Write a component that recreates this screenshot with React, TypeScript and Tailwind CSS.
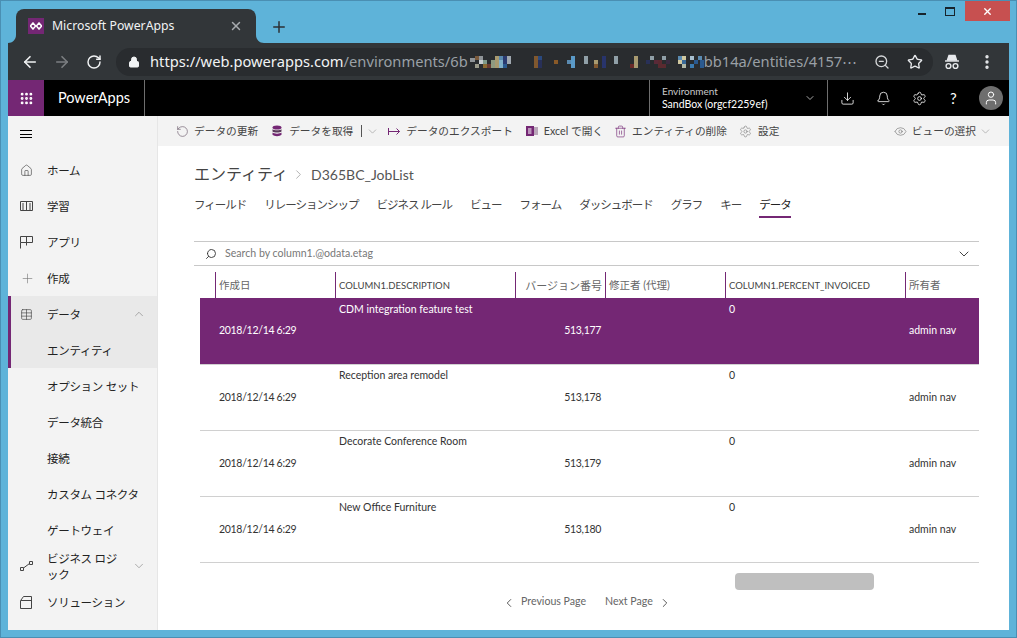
import React from "react";
import {
  ArrowLeft,
  ArrowRight,
  RotateCw,
  Lock,
  ZoomOut,
  Star,
  Plus,
  X,
  Grip,
  ChevronDown,
  ChevronUp,
  ChevronLeft,
  ChevronRight,
  Download,
  Bell,
  Settings,
  User,
  House,
  Table,
  Search,
  Eye,
  Trash2,
  EllipsisVertical,
} from "lucide-react";

const uiFont = "[font-family:'Lato','Noto_Sans_CJK_JP',sans-serif]";

// blurred part of the address bar
const mosaic: [number, number, number, number, string][] = [
  [0, 2, 5, 4, "#8f9498"], [5, 0, 4, 4, "#7a5a3c"], [9, 0, 4, 4, "#8f9498"], [5, 4, 4, 4, "#2a2d30"],
  [9, 4, 4, 4, "#c8cdd0"], [5, 8, 4, 4, "#9a9a8a"], [13, 4, 4, 4, "#7f9a8a"], [13, 8, 4, 4, "#8a6a30"],
  [17, 8, 4, 4, "#6a3a30"], [21, 4, 4, 8, "#8f9a80"], [25, 0, 4, 12, "#a89a70"], [29, 0, 4, 4, "#5a8ab0"],
  [29, 4, 4, 8, "#80b0c8"], [33, 0, 4, 8, "#2a3a70"], [33, 8, 4, 4, "#2a5a90"], [37, 0, 4, 8, "#a0a8b0"],
  [64, 0, 4, 12, "#80582f"], [68, 0, 4, 4, "#2a4a80"], [68, 4, 4, 8, "#283058"], [84, 4, 4, 4, "#8a5a28"],
  [97, 4, 4, 4, "#5a8ab0"], [101, 0, 4, 12, "#5a9ac8"], [114, 0, 4, 8, "#90a0a8"], [124, 4, 4, 4, "#a89a70"],
  [124, 8, 4, 4, "#80582f"], [132, 0, 4, 12, "#28346c"], [144, 0, 4, 8, "#90a0a8"], [160, 8, 4, 4, "#6a2a28"],
  [164, 0, 4, 12, "#a89a70"], [176, 4, 4, 4, "#283058"], [180, 0, 4, 4, "#90a0a8"], [184, 4, 4, 4, "#5a2a38"],
  [188, 4, 4, 8, "#5a2a30"], [192, 0, 4, 4, "#90a0a8"], [192, 8, 4, 4, "#5a2a30"], [196, 4, 4, 4, "#3a2a40"],
  [208, 0, 4, 4, "#5a8ab0"], [212, 0, 4, 4, "#d0c8a0"], [208, 4, 4, 4, "#d0c8a0"], [212, 4, 4, 4, "#3a6a98"],
  [212, 8, 4, 4, "#b0b8a8"], [220, 0, 4, 4, "#a8c0d0"], [224, 4, 4, 4, "#2a5a90"], [220, 8, 4, 4, "#3a7ab0"],
  [228, 0, 4, 4, "#5a8ab0"], [230, 4, 4, 8, "#2a5a90"],
];

function TabFlare({ flip }: { flip?: boolean }) {
  return (
    <svg width="8" height="8" viewBox="0 0 8 8" className={flip ? "-scale-x-100 self-end" : "self-end"}>
      <path d="M8 0V8H0C4.5 8 8 4.5 8 0Z" fill="#323639" />
    </svg>
  );
}

function TitleBar() {
  return (
    <div className="relative flex h-[42px] shrink-0 items-end pl-[7px]">
      <TabFlare />
      <div className="flex h-[34px] w-[240px] items-center rounded-t-[8px] bg-[#323639] pl-[12px] pr-[13px]">
        <span className="flex h-4 w-4 items-center justify-center bg-[#742774]">
          <svg width="12" height="8" viewBox="0 0 12 8">
            <path d="M3 1 5.6 4 3 7 .4 4ZM9 1 11.6 4 9 7 6.4 4Z" fill="none" stroke="#fff" strokeWidth="1.5" />
          </svg>
        </span>
        <span className="ml-2 text-[12.25px] text-[#f1f3f4] font-['Noto_Sans',sans-serif]">Microsoft PowerApps</span>
        <X className="ml-auto h-[14px] w-[14px] text-[#a8abae]" strokeWidth={2.5} />
      </div>
      <TabFlare flip />
      <Plus className="mb-[7px] ml-[6px] h-[18px] w-[18px] text-[#2c3135]" strokeWidth={2} />
      {/* window buttons */}
      <div className="absolute right-[6px] top-0 flex h-5 items-center">
        <span className="mr-[19px] mt-[6px] h-[2px] w-[8px] bg-[#17242c]" />
        <span className="mr-[10px] h-[9px] w-[10px] border border-t-2 border-[#17242c]" />
        <span className="flex h-5 w-[45px] items-center justify-center bg-[#c75050]">
          <X className="h-[11px] w-[11px] text-white" strokeWidth={3} />
        </span>
      </div>
    </div>
  );
}

function Toolbar() {
  return (
    <div className="flex h-[37px] shrink-0 items-center bg-[#323639] pl-[13px] pr-[12px]">
      <ArrowLeft className="h-[18px] w-[18px] text-[#f1f3f4]" strokeWidth={2.2} />
      <ArrowRight className="ml-[14px] h-[18px] w-[18px] text-[#7c7f82]" strokeWidth={2.2} />
      <RotateCw className="ml-[15px] h-[16px] w-[16px] text-[#f1f3f4]" strokeWidth={2.2} />
      <div className="ml-[14px] flex h-[28px] w-[817px] items-center rounded-full bg-[#292c2f] pl-[12px] pr-[10px]">
        <Lock className="h-[12px] w-[12px] text-[#f1f3f4]" fill="#f1f3f4" strokeWidth={2} />
        <span className="ml-[10px] whitespace-nowrap text-[14.7px] text-[#f1f3f4] font-['Noto_Sans',sans-serif]">
          https://web.powerapps.com<span className="text-[#9aa0a6]">/environments/6b</span>
        </span>
        <svg width="234" height="12" viewBox="0 0 234 12" className="ml-[2px] shrink-0">
          {mosaic.map(([x, y, w, h, c], i) => (
            <rect key={i} x={x} y={y} width={w} height={h} fill={c} />
          ))}
        </svg>
        <span className="whitespace-nowrap text-[14.7px] text-[#9aa0a6] font-['Noto_Sans',sans-serif]">
          bb14a/entities/4157⋯
        </span>
        <ZoomOut className="ml-auto h-[16px] w-[16px] text-[#d5d7d9]" strokeWidth={2} />
        <Star className="ml-[17px] h-[16px] w-[16px] text-[#e8eaed]" strokeWidth={2} />
      </div>
      <svg width="18" height="18" viewBox="0 0 18 18" className="ml-[10px]" fill="none" stroke="#e8eaed" strokeWidth="1.4">
        <path d="M2 8h14" />
        <path d="M4.5 7 6 2.5h6L13.5 7Z" fill="#e8eaed" />
        <circle cx="5.5" cy="13" r="2.4" />
        <circle cx="12.5" cy="13" r="2.4" />
      </svg>
      <EllipsisVertical className="ml-[17px] h-[18px] w-[18px] text-[#e8eaed]" strokeWidth={2.5} />
    </div>
  );
}

function AppHeader() {
  return (
    <div className={`flex h-[36px] shrink-0 items-stretch bg-black text-white ${uiFont}`}>
      <div className="flex w-[36px] items-center justify-center bg-[#742774]">
        <Grip className="h-[15px] w-[15px]" strokeWidth={2.6} />
      </div>
      <div className="flex w-[101px] items-center justify-center border-r border-[#6e6e6e] text-[14.5px]">PowerApps</div>
      <div className="ml-auto flex w-[179px] items-center border-x border-[#6e6e6e] pl-[12px] pr-[11px]">
        <div className="leading-[13px]">
          <div className="text-[10px] text-[#c8c8c8]">Environment</div>
          <div className="whitespace-nowrap text-[10.5px]">SandBox (orgcf2259ef)</div>
        </div>
        <ChevronDown className="ml-auto h-[12px] w-[12px] text-[#a8a8a8]" />
      </div>
      <div className="flex w-[181px] items-center pl-[12px]">
        <Download className="h-[15px] w-[15px]" strokeWidth={1.3} />
        <Bell className="ml-[21px] h-[15px] w-[15px]" strokeWidth={1.3} />
        <Settings className="ml-[21px] h-[15px] w-[15px]" strokeWidth={1.3} />
        <span className="ml-[23px] text-[15px] leading-none">?</span>
        <span className="ml-[22px] flex h-[24px] w-[24px] items-center justify-center rounded-full bg-[#6e6e6e]">
          <User className="h-[16px] w-[16px]" strokeWidth={1.5} />
        </span>
      </div>
    </div>
  );
}

function BookIcon() {
  return (
    <svg width="13" height="12" viewBox="0 0 13 12" fill="none" stroke="#444" strokeWidth="1">
      <path d="M.5 1.5h12v9H.5ZM6.5 1.5v9M3 3v7M10 3v7" />
    </svg>
  );
}

function AppIcon() {
  return (
    <svg width="13" height="13" viewBox="0 0 13 13" fill="none" stroke="#444" strokeWidth="1">
      <path d="M.5.5h12v6H.5ZM.5 6.5v6M6.5.5v9" />
    </svg>
  );
}

function LogicIcon() {
  return (
    <svg width="13" height="10" viewBox="0 0 13 10" fill="none" stroke="#444" strokeWidth="1">
      <path d="M.5 6.5h3v3h-3ZM9.5.5h3v3h-3ZM3.5 7 9.5 2.5" />
    </svg>
  );
}

function SolutionIcon() {
  return (
    <svg width="12" height="13" viewBox="0 0 12 13" fill="none" stroke="#444" strokeWidth="1">
      <path d="M.5 4.5h11v8H.5ZM1 4 3.5.5h8v8" />
    </svg>
  );
}

type NavItem = {
  label: React.ReactNode;
  icon?: React.ReactNode;
  chevron?: "up" | "down";
  active?: boolean;
};

const navItems: NavItem[] = [
  { label: "ホーム", icon: <House className="h-[13px] w-[13px] text-[#444]" strokeWidth={1.2} /> },
  { label: "学習", icon: <BookIcon /> },
  { label: "アプリ", icon: <AppIcon /> },
  { label: "作成", icon: <Plus className="h-[15px] w-[15px] text-[#777]" strokeWidth={1} /> },
  { label: "データ", icon: <Table className="h-[13px] w-[13px] text-[#444]" strokeWidth={1.2} />, chevron: "up", active: true },
  { label: "エンティティ", active: true },
  { label: "オプション セット" },
  { label: "データ統合" },
  { label: "接続" },
  { label: "カスタム コネクタ" },
  { label: "ゲートウェイ" },
  { label: <>ビジネス ロジ<br />ック</>, icon: <LogicIcon />, chevron: "down" },
  { label: "ソリューション", icon: <SolutionIcon /> },
];

function Sidebar() {
  return (
    <aside className={`flex w-[150px] shrink-0 flex-col border-r border-[#e6e6e6] bg-[#f3f3f3] text-[#222] ${uiFont}`}>
      <div className="flex h-[36px] items-center pl-[12px]">
        <span className="flex h-[8px] w-[12px] flex-col justify-between">
          <span className="h-px bg-black" />
          <span className="h-px bg-black" />
          <span className="h-px bg-black" />
        </span>
      </div>
      {navItems.map((item, i) => (
        <div
          key={i}
          className={`flex h-[36px] items-center border-l-[3px] pl-[9px] text-[11.5px] leading-[16px] ${
            item.active ? "border-[#742774] bg-[#e9e9e9]" : "border-transparent"
          }`}
        >
          <span className="flex w-[27px] shrink-0 items-center">{item.icon}</span>
          <span className="w-[85px] whitespace-nowrap pt-px tracking-[-0.3px]">{item.label}</span>
          {item.chevron === "up" && <ChevronUp className="h-[14px] w-[14px] text-[#777]" strokeWidth={1} />}
          {item.chevron === "down" && <ChevronDown className="h-[14px] w-[14px] text-[#777]" strokeWidth={1} />}
        </div>
      ))}
    </aside>
  );
}

function ExcelIcon() {
  return (
    <svg width="12" height="12" viewBox="0 0 12 12">
      <rect x="5" y="2" width="7" height="8" fill="#b9a6b9" />
      <rect x="0" y="1" width="8" height="10" fill="#742774" />
      <path d="M2 4h3.5M2 6h3.5M2 8h3.5" stroke="#fff" strokeWidth="1" />
    </svg>
  );
}

function DbIcon() {
  return (
    <svg width="12" height="12" viewBox="0 0 12 12" className="ml-[13px]">
      <ellipse cx="6" cy="2.5" rx="4.5" ry="2" fill="#742774" />
      <path d="M1.5 4.2C3 5.6 9 5.6 10.5 4.2V6.4C9 7.8 3 7.8 1.5 6.4Z" fill="#5a3a5a" />
      <path d="M1.5 7.6C3 9 9 9 10.5 7.6V9.8C9 11.6 3 11.6 1.5 9.8Z" fill="#742774" />
    </svg>
  );
}

function ExportIcon() {
  return (
    <svg width="13" height="9" viewBox="0 0 13 9" className="ml-[9px]" fill="none" stroke="#742774" strokeWidth="1">
      <path d="M.5 1v7M.5 4.5h11M8.5 1.5l3 3-3 3" />
    </svg>
  );
}

function CommandBar() {
  return (
    <div className="flex h-[30px] shrink-0 items-center bg-[#f3f3f3] pl-[18px] pr-[17px] text-[10.7px] text-[#444]">
      <RotateCw className="h-[13px] w-[13px] -scale-x-100 text-[#6a5a6a]" strokeWidth={1.2} />
      <span className="ml-[5px]">データの更新</span>
      <DbIcon />
      <span className="ml-[6px]">データを取得</span>
      <span className="ml-[8px] h-[12px] w-px bg-[#555]" />
      <ChevronDown className="ml-[4px] h-[13px] w-[13px] text-[#999]" strokeWidth={1.2} />
      <ExportIcon />
      <span className="ml-[5px]">データのエクスポート</span>
      <span className="ml-[13px]"><ExcelIcon /></span>
      <span className="ml-[6px]">Excel で開く</span>
      <Trash2 className="ml-[11px] h-[13px] w-[13px] text-[#742774]" strokeWidth={1.2} />
      <span className="ml-[5px]">エンティティの削除</span>
      <Settings className="ml-[12px] h-[13px] w-[13px] text-[#777]" strokeWidth={1.1} />
      <span className="ml-[6px]">設定</span>
      <Eye className="ml-auto h-[13px] w-[13px] text-[#777]" strokeWidth={1.2} />
      <span className="ml-[5px]">ビューの選択</span>
      <ChevronDown className="ml-[3px] h-[13px] w-[13px] text-[#999]" strokeWidth={1.2} />
    </div>
  );
}

const tabs = ["フィールド", "リレーションシップ", "ビジネス ルール", "ビュー", "フォーム", "ダッシュボード", "グラフ", "キー", "データ"];

const gridCols = "grid grid-cols-[15px_120px_180px_90px_120px_180px_74px]";

const headers = [
  { label: "作成日", cls: "text-[10.5px] text-[#666]" },
  { label: "COLUMN1.DESCRIPTION", cls: "text-[9.5px] text-[#444]" },
  { label: "バージョン番号", cls: "justify-end pr-[3px] text-[11px] text-[#666]" },
  { label: "修正者 (代理)", cls: "text-[10.5px] text-[#666]" },
  { label: "COLUMN1.PERCENT_INVOICED", cls: "text-[9.5px] text-[#444]" },
  { label: "所有者", cls: "text-[10.5px] text-[#666]" },
];

const rows = [
  { desc: "CDM integration feature test", version: "513,177", selected: true },
  { desc: "Reception area remodel", version: "513,178" },
  { desc: "Decorate Conference Room", version: "513,179" },
  { desc: "New Office Furniture", version: "513,180" },
];

function DataTable() {
  return (
    <div className="ml-[6px] mt-[6px] w-[779px]">
      <div className={`${gridCols} h-[26px] items-stretch`}>
        <span />
        {headers.map((h) => (
          <span
            key={h.label}
            className={`flex items-center whitespace-nowrap border-l border-[#742774] pl-[3px] pt-[2px] ${h.cls}`}
          >
            {h.label}
          </span>
        ))}
      </div>
      {rows.map((r) => (
        <div
          key={r.version}
          className={`${gridCols} h-[66px] text-[10.5px] ${
            r.selected ? "bg-[#742774] text-white" : "border-t border-[#d0d0d0] text-[#333]"
          }`}
        >
          <span />
          <span className="flex items-center pl-[4px] tracking-[-0.3px]">2018/12/14 6:29</span>
          <span className={`pl-[4px] ${r.selected ? "pt-[4px]" : "pt-[3px]"}`}>{r.desc}</span>
          <span className="flex items-center justify-end pr-[4px] tracking-[-0.3px]">{r.version}</span>
          <span />
          <span className={`pl-[4px] ${r.selected ? "pt-[4px]" : "pt-[3px]"}`}>0</span>
          <span className="flex items-center pl-[4px]">admin nav</span>
        </div>
      ))}
      <div className="h-px bg-[#d0d0d0]" />
    </div>
  );
}

function Main() {
  return (
    <main className={`relative flex min-w-0 flex-1 flex-col bg-white ${uiFont}`}>
      <CommandBar />
      <div className="pl-[36px] pt-[16px]">
        <div className="flex h-[24px] items-center text-[#444]">
          <span className="text-[16px]">エンティティ</span>
          <ChevronRight className="ml-[3px] h-[15px] w-[15px] text-[#999]" strokeWidth={1.2} />
          <span className="ml-[5px] text-[14px] text-[#555]">D365BC_JobList</span>
        </div>
        <div className="mt-[10px] flex h-[22px] gap-[18px] text-[11.5px] text-[#444]">
          {tabs.map((t, i) => (
            <span
              key={t}
              className={`whitespace-nowrap tracking-[-1px] ${i === tabs.length - 1 ? "h-[22px] border-b-2 border-[#742774] text-[#222]" : ""}`}
            >
              {t}
            </span>
          ))}
        </div>
        <div className="mt-[23px] flex h-[25px] w-[785px] items-center border-y border-[#c8c8c8] pl-[11px] pr-[7px] text-[10.6px] text-[#777]">
          <Search className="h-[12px] w-[12px] -scale-x-100 text-[#333]" strokeWidth={1.8} />
          <span className="ml-[8px]">Search by column1.@odata.etag</span>
          <ChevronDown className="ml-auto h-[16px] w-[16px] text-[#444]" strokeWidth={1.5} />
        </div>
        <DataTable />
        <div className="ml-[308px] mt-[32px] flex items-center text-[10.6px] text-[#666]">
          <ChevronLeft className="h-[14px] w-[14px] text-[#444]" strokeWidth={1.5} />
          <span className="ml-[5px] -translate-y-px">Previous Page</span>
          <span className="ml-[19px] -translate-y-px">Next Page</span>
          <ChevronRight className="ml-[5px] h-[14px] w-[14px] text-[#444]" strokeWidth={1.5} />
        </div>
      </div>
      {/* floating scrollbar thumb */}
      <div className="absolute left-[577px] top-[457px] h-[17px] w-[139px] rounded-[4px] bg-[#bfbfbf]" />
    </main>
  );
}

export default function App() {
  return (
    <div className="flex h-[638px] w-[1017px] flex-col overflow-hidden border border-[#4a8fb3] bg-[#5eb3d9]">
      <TitleBar />
      <div className="mx-[7px] mb-[7px] flex min-h-0 flex-1 flex-col">
        <Toolbar />
        <AppHeader />
        <div className="flex min-h-0 flex-1">
          <Sidebar />
          <Main />
        </div>
      </div>
    </div>
  );
}
